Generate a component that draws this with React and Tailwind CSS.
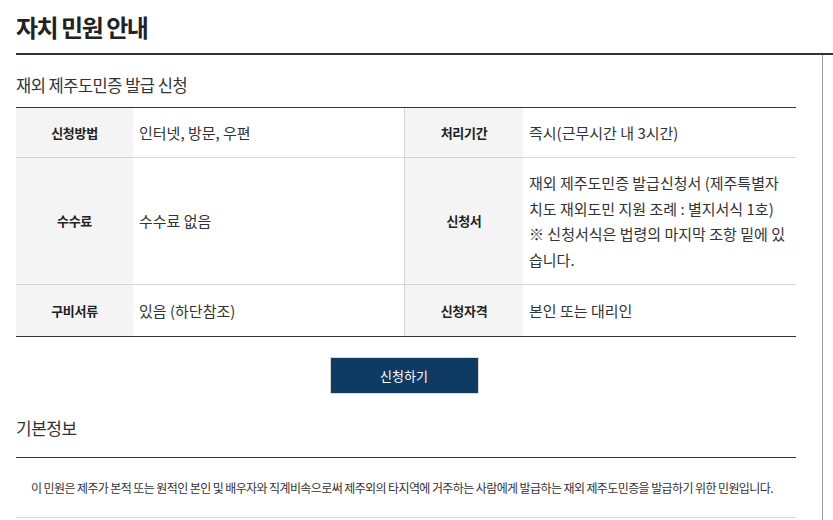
import React from "react";

const rows = [
  {
    h: "h-[50px]",
    th1: "신청방법",
    td1: ["인터넷, 방문, 우편"],
    th2: "처리기간",
    td2: ["즉시(근무시간 내 3시간)"],
  },
  {
    h: "h-[127px]",
    th1: "수수료",
    td1: ["수수료 없음"],
    th2: "신청서",
    td2: [
      "재외 제주도민증 발급신청서 (제주특별자",
      "치도 재외도민 지원 조례 : 별지서식 1호)",
      "※ 신청서식은 법령의 마지막 조항 밑에 있",
      "습니다.",
    ],
  },
  {
    h: "h-[51px]",
    th1: "구비서류",
    td1: ["있음 (하단참조)"],
    th2: "신청자격",
    td2: ["본인 또는 대리인"],
  },
];

const Cell = ({ lines }) => (
  <div className="flex flex-col justify-center pl-[6px] text-[15px] leading-[25.5px] text-[#333]">
    {lines.map((l) => (
      <span key={l} className="block whitespace-nowrap">
        {l}
      </span>
    ))}
  </div>
);

const Th = ({ children }) => (
  <div className="flex items-center justify-center bg-[#f4f4f4] text-[13px] font-bold text-[#222] tracking-[-0.3px]">
    {children}
  </div>
);

export default function App() {
  return (
    <div className="w-[833px] h-[520px] overflow-hidden bg-white font-['Noto_Sans_CJK_KR','Noto_Sans',sans-serif] text-[#333]">
      <div className="pl-4">
        {/* Page title */}
        <h2 className="flex items-center h-[55px] border-b-2 border-[#333] text-[24px] font-bold text-[#222] tracking-[-1.5px]">
          자치 민원 안내
        </h2>

        <div className="flex">
          <div className="w-[780px] shrink-0">
            <h3 className="pt-[19px] pb-[11px] text-[16.5px] leading-[22px] tracking-[-0.5px]">
              재외 제주도민증 발급 신청
            </h3>

            {/* Info table */}
            <div className="border-t border-b border-[#333]">
              {rows.map((r, i) => (
                <div
                  key={r.th1}
                  className={`grid grid-cols-[117px_271px_1px_118px_273px] ${r.h} ${
                    i < rows.length - 1 ? "border-b border-[#d5d5d5]" : ""
                  }`}
                >
                  <Th>{r.th1}</Th>
                  <Cell lines={r.td1} />
                  <div className="bg-[#d5d5d5]" />
                  <Th>{r.th2}</Th>
                  <Cell lines={r.td2} />
                </div>
              ))}
            </div>

            <div className="flex justify-center pr-[4px] mt-[20px]">
              <button className="w-[149px] h-[37px] border border-[#d9d9d9] bg-[#0f3a61] text-[13px] text-white">
                신청하기
              </button>
            </div>

            {/* Basic info */}
            <h3 className="mt-[23px] pb-[18px] border-b border-[#333] text-[17px] leading-[22px] tracking-[-0.5px]">
              기본정보
            </h3>
            <p className="pl-[15px] pt-[21px] pb-[20px] border-b border-[#d5d5d5] text-[12px] leading-[18px] tracking-[-0.6px] whitespace-nowrap">
              이 민원은 제주가 본적 또는 원적인 본인 및 배우자와 직계비속으로써 제주외의 타지역에 거주하는 사람에게 발급하는 재외 제주도민증을 발급하기 위한 민원입니다.
            </p>
          </div>
          <div className="ml-[26px] flex-1 border-l border-[#999] h-[470px]" />
        </div>
      </div>
    </div>
  );
}
